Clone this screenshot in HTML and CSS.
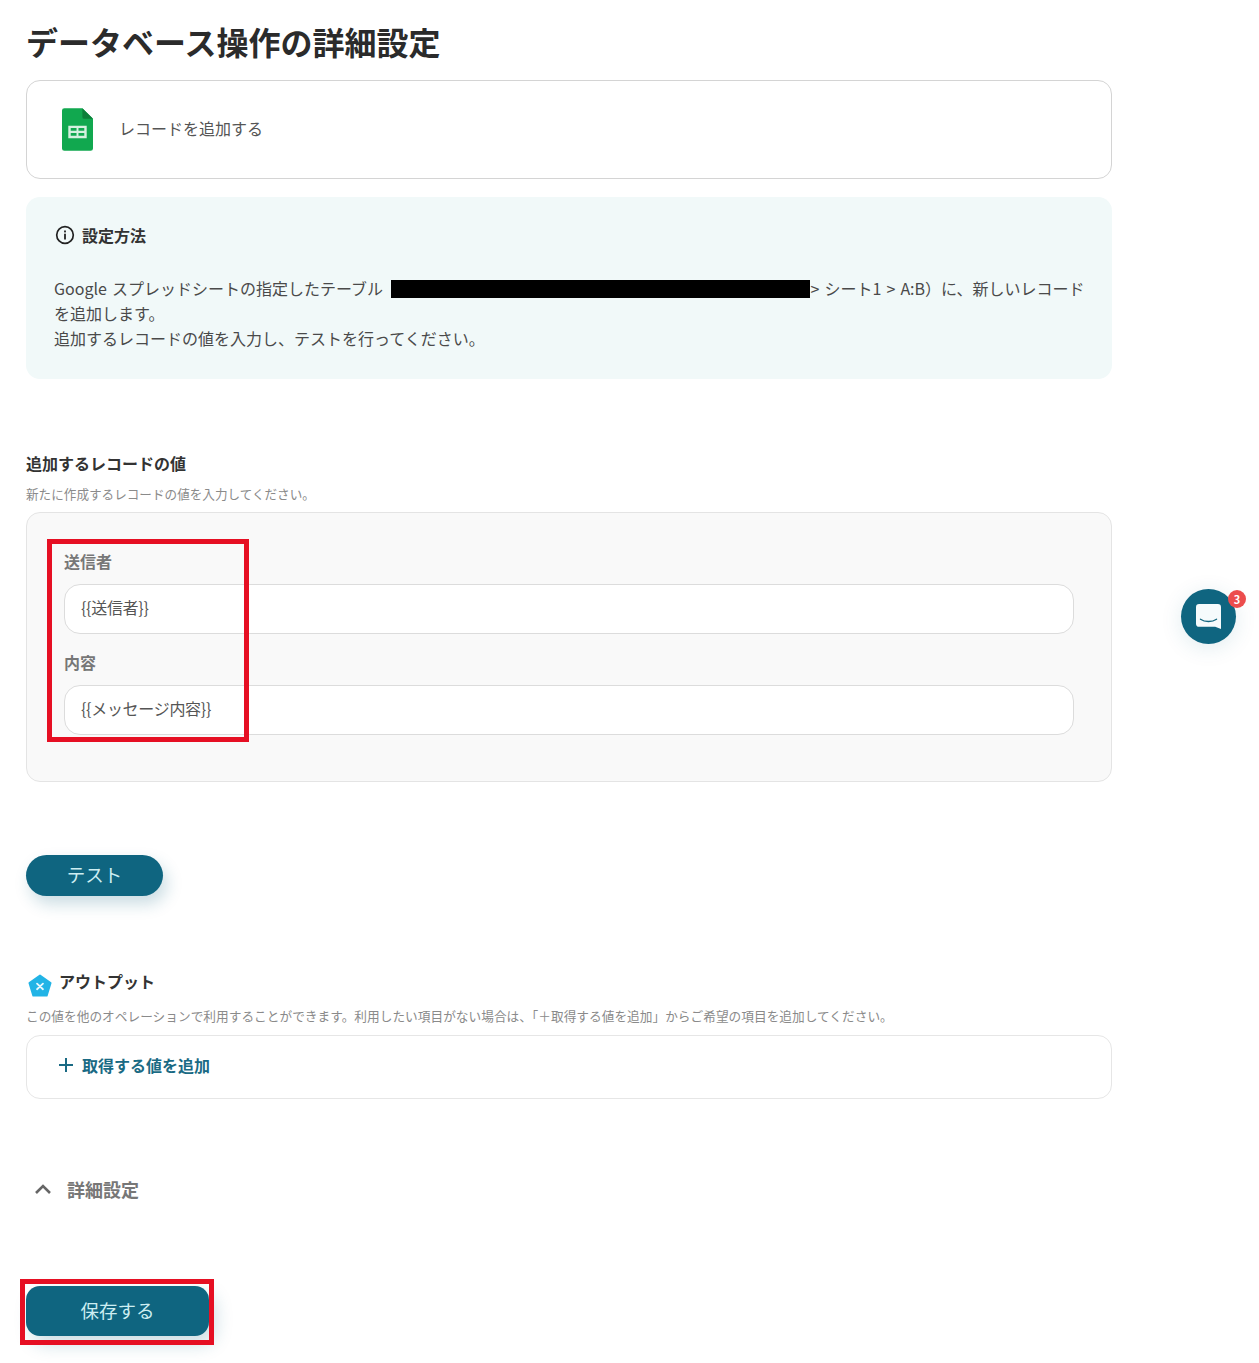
FILE: index.html
```html
<!DOCTYPE html>
<html lang="ja">
<head>
<meta charset="utf-8">
<title>データベース操作の詳細設定</title>
<link rel="stylesheet" href="styles.css">
</head>
<body>
<main class="page">
  <h1 class="title">データベース操作の詳細設定</h1>
  <section class="action-card">
    <svg class="sheet-icon" viewBox="0 0 32 44" width="31" height="43" aria-hidden="true">
      <path d="M2 0H21L32 11V41.500a2.500 2.500 0 0 1-2.500 2.500H2.500A2.500 2.500 0 0 1 0 41.500V2.500A2.500 2.500 0 0 1 2.500 0Z" fill="#11a84f"/>
      <path d="M21 0L32 11H23a2 2 0 0 1-2-2Z" fill="#0c7f3a"/>
      <path d="M6.500 18H25.500V31H6.500ZM9 20.500V23.300H15V20.500ZM17 20.500V23.300H23V20.500ZM9 25.500V28.500H15V25.500ZM17 25.500V28.500H23V25.500Z" fill="#d5f0df" fill-rule="evenodd"/>
    </svg>
    <span class="action-name">レコードを追加する</span>
  </section>
  <section class="notice">
    <div class="notice-head">
      <svg viewBox="0 0 20 20" width="20" height="20" aria-hidden="true">
        <circle cx="10" cy="10" r="8.300" fill="none" stroke="#222" stroke-width="1.700"/>
        <rect x="9.100" y="8.700" width="1.800" height="5.800" fill="#222"/>
        <rect x="9.100" y="5.500" width="1.800" height="1.900" fill="#222"/>
      </svg>
      <strong>設定方法</strong>
    </div>
    <p class="notice-text">Google スプレッドシートの指定したテーブル<span class="redacted"></span>&gt; シート1 &gt; A:B）に、新しいレコード<br>を追加します。<br>追加するレコードの値を入力し、テストを行ってください。</p>
  </section>
  <section class="values">
    <h2 class="section-title">追加するレコードの値</h2>
    <p class="hint hint-values">新たに作成するレコードの値を入力してください。</p>
    <div class="field-panel">
      <div class="field">
        <label class="field-label">送信者</label>
        <div class="input">{{送信者}}</div>
      </div>
      <div class="field">
        <label class="field-label">内容</label>
        <div class="input">{{メッセージ内容}}</div>
      </div>
      <div class="mark mark-fields"></div>
    </div>
  </section>
  <button class="btn btn-test" type="button">テスト</button>
  <section class="output">
    <div class="output-head">
      <svg viewBox="0 0 26 26" width="24" height="24" aria-hidden="true">
        <path d="M13 1.500L24.500 9.800 20.300 23.500H5.700L1.500 9.800Z" fill="#22b4e6" stroke="#22b4e6" stroke-width="2" stroke-linejoin="round"/>
        <path d="M9.800 10.500L16.200 16.500M16.200 10.500L9.800 16.500" stroke="#e8f8fe" stroke-width="2" stroke-linecap="round"/>
      </svg>
      <h2>アウトプット</h2>
    </div>
    <p class="hint hint-output">この値を他のオペレーションで利用することができます。利用したい項目がない場合は、「＋取得する値を追加」からご希望の項目を追加してください。</p>
    <div class="add-card">
      <svg viewBox="0 0 16 16" width="16" height="16" aria-hidden="true">
        <path d="M8 1V15M1 8H15" stroke="#1a6a84" stroke-width="2"/>
      </svg>
      <span>取得する値を追加</span>
    </div>
  </section>
  <div class="advanced">
    <svg viewBox="0 0 18 12" width="18" height="12" aria-hidden="true">
      <path d="M2 10L9 3L16 10" fill="none" stroke="#666" stroke-width="2.600"/>
    </svg>
    <span>詳細設定</span>
  </div>
  <div class="save-wrap">
    <button class="btn btn-save" type="button">保存する</button>
    <div class="mark mark-save"></div>
  </div>
</main>
<aside class="chat">
  <svg viewBox="0 0 28 28" width="25" height="27" aria-hidden="true">
    <path d="M3.500 0H24.500A3.500 3.500 0 0 1 28 3.500V28L21.500 25.500H3.500A3.500 3.500 0 0 1 0 22V3.500A3.500 3.500 0 0 1 3.500 0Z" fill="#f6fbfc"/>
    <path d="M5 17C10 20.500 18 20.500 23 17" fill="none" stroke="#13667f" stroke-width="1.500" stroke-linecap="round"/>
  </svg>
  <span class="badge">3</span>
</aside>
</body>
</html>
```
FILE: styles.css
```css
* { box-sizing: border-box; }
html, body { margin: 0; padding: 0; background: #fff; }
body {
  width: 1259px;
  height: 1363px;
  overflow: hidden;
  position: relative;
  font-family: "Noto Sans CJK JP", "Noto Sans", sans-serif;
  color: #444;
}
.page { width: 1086px; margin-left: 26px; padding-top: 20px; }
.title { margin: 0; height: 60px; font-size: 32px; line-height: 42px; font-weight: 700; color: #2b2b2b; white-space: nowrap; }
.action-card {
  height: 99px; display: flex; align-items: center; gap: 26px;
  padding-left: 35px; border: 1px solid #d4d4d4; border-radius: 14px; background: #fff;
}
.action-name { font-size: 16px; color: #555; padding-bottom: 4px; }
.notice {
  margin-top: 18px; height: 182px; padding: 26px 27px 0 28px;
  background: #f1f9f9; border-radius: 14px;
}
.notice-head { display: flex; align-items: center; gap: 7px; height: 24px; margin-left: 1px; font-size: 16px; color: #333; }
.notice-text { margin: 29px 0 0; font-size: 16px; line-height: 25px; color: #4a4a4a; word-spacing: 1.500px; white-space: nowrap; }
.redacted { display: inline-block; width: 419px; height: 18px; margin-left: 8.500px; background: #000; vertical-align: -3px; }
.values { margin-top: 72px; }
.section-title { margin: 0; font-size: 16px; line-height: 24px; color: #333; font-weight: 700; }
.hint { margin: 0; line-height: 18px; color: #8a8a8a; white-space: nowrap; }
.hint-values { margin-top: 10px; font-size: 12.600px; }
.field-panel {
  position: relative; margin-top: 9px; height: 270px; padding: 37px 37px 0;
  border: 1px solid #e4e4e4; border-radius: 14px; background: #f9f9f9;
}
.field + .field { margin-top: 17px; }
.field-label { display: block; height: 24px; font-size: 16px; line-height: 22px; font-weight: 700; color: #777; }
.input {
  height: 50px; margin-top: 10px; padding-left: 16px;
  border: 1px solid #dcdcdc; border-radius: 16px; background: #fff;
  font-size: 16px; line-height: 44px; color: #555; letter-spacing: -.3px;
}
.mark { position: absolute; border: 5px solid #e60f23; pointer-events: none; }
.mark-fields { left: 20px; top: 26px; width: 202px; height: 203px; }
.btn { display: block; border: 0; padding: 0 0 3px; font-family: inherit; font-size: 18.500px; color: #cdeef2; background: #0f6580; }
.btn-test {
  width: 137px; height: 41px; margin-top: 73px; border-radius: 21px;
  box-shadow: 4px 8px 16px rgba(17, 101, 127, .22);
}
.output { margin-top: 69px; }
.output-head { display: flex; align-items: flex-start; gap: 7px; height: 32px; margin-left: 2px; }
.output-head svg { margin-top: 9px; flex: none; }
.output-head h2 { margin: 4px 0 0; font-size: 16px; line-height: 24px; font-weight: 700; color: #333; }
.hint-output { margin-top: 10px; font-size: 12.700px; }
.add-card {
  display: flex; align-items: center; gap: 8px; height: 64px; margin-top: 10px; padding: 0 0 5px 31px;
  border: 1px solid #e6e6e6; border-radius: 14px; background: #fff;
  font-size: 16px; font-weight: 700; color: #1a6a84;
}
.advanced { display: flex; align-items: center; gap: 15px; height: 30px; margin-top: 75px; margin-left: 8px; font-size: 18px; font-weight: 700; color: #777; }
.save-wrap { position: relative; margin-top: 82px; width: 183px; }
.btn-save {
  width: 183px; height: 50px; border-radius: 14px;
  box-shadow: 6px 8px 18px rgba(17, 101, 127, .22);
}
.mark-save { left: -6px; top: -7px; width: 194px; height: 66px; }
.chat {
  position: absolute; left: 1181px; top: 589px; width: 55px; height: 55px; border-radius: 50%;
  background: #0f6580; display: flex; align-items: center; justify-content: center;
  box-shadow: 0 4px 22px rgba(17, 101, 127, .12);
}
.badge {
  position: absolute; left: 47px; top: 1px; width: 18px; height: 18px; border-radius: 50%;
  background: #ec4d4d; color: #fff; font-size: 11px; font-weight: 700; line-height: 18px; text-align: center;
}
```
